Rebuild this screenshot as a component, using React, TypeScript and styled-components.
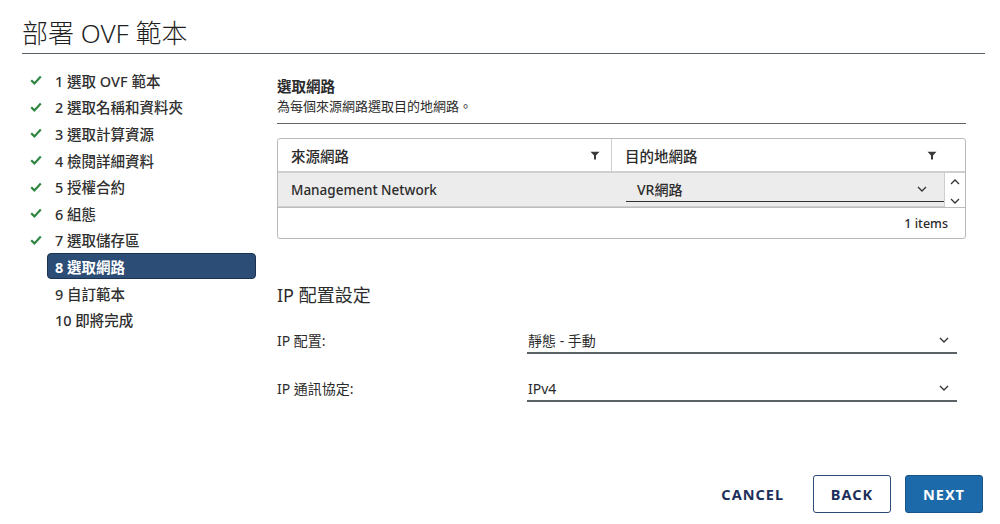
import styled, { createGlobalStyle } from "styled-components";

const Global = createGlobalStyle`
  html, body { margin: 0; padding: 0; background: #fff; }
  body {
    font-family: "Noto Sans", "Noto Sans CJK TC", sans-serif;
    color: #2b2b2b;
  }
  * { box-sizing: border-box; }
`;

/* page */
const Page = styled.div`
  height: 524px;
  display: flex;
  flex-direction: column;
  padding: 0 15px 0 22px;
`;

const Header = styled.h1`
  margin: 17px 0 0;
  padding-bottom: 4px;
  font-size: 26px;
  font-weight: 300;
  line-height: 32px;
  color: #1f1f1f;
  border-bottom: 1.5px solid #5a6166;
`;

const Body = styled.div`
  flex: 1;
  display: grid;
  grid-template-columns: 255px 1fr;
  padding-top: 13px;
`;

/* steps */
const Steps = styled.ol`
  list-style: none;
  margin: 0;
  padding: 0 0 0 8px;
`;

const Step = styled.li`
  display: flex;
  align-items: center;
  height: 26.6px;
`;

const CheckSlot = styled.span`
  width: 17px;
  display: flex;
  align-items: center;
`;

const StepLabel = styled.span<{ $active?: boolean }>`
  flex: 0 0 209px;
  height: 26px;
  display: flex;
  align-items: center;
  padding: 0 7px;
  font-size: 14.5px;
  font-weight: ${(p) => (p.$active ? 700 : 500)};
  color: ${(p) => (p.$active ? "#fff" : "#2f2f2f")};
  background: ${(p) => (p.$active ? "#2c4d75" : "transparent")};
  border: 1.5px solid ${(p) => (p.$active ? "#1b3350" : "transparent")};
  border-radius: 4px;
`;

/* content */
const Content = styled.section`
  padding-top: 7px;
  padding-right: 19px;
`;

const SectionTitle = styled.div`
  font-size: 14.5px;
  font-weight: 700;
  line-height: 20px;
  margin-top: 2px;
`;

const SectionSub = styled.div`
  font-size: 13px;
  line-height: 20px;
  padding-bottom: 7px;
  border-bottom: 1.5px solid #5f6468;
`;

const Grid = styled.div`
  margin-top: 14px;
  border: 1px solid #b9b9b9;
  border-radius: 3px;
  overflow: hidden;
`;

const HeadRow = styled.div`
  display: grid;
  grid-template-columns: 334px 1fr;
  height: 34px;
  border-bottom: 2px solid #cfcfcf;
`;

const HeadCell = styled.div<{ $padRight: number; $last?: boolean }>`
  display: flex;
  align-items: center;
  justify-content: space-between;
  padding: 0 ${(p) => p.$padRight}px 0 13px;
  font-size: 14.5px;
  font-weight: 500;
  border-right: ${(p) => (p.$last ? "none" : "1px solid #cfcfcf")};
`;

const BodyRow = styled.div`
  display: grid;
  grid-template-columns: 1fr 20px;
  height: 35px;
  border-bottom: 1px solid #bdbdbd;
`;

const RowCells = styled.div`
  display: grid;
  grid-template-columns: 334px 1fr;
  background: #ececec;
  border-right: 1px solid #cfcfcf;
  border-bottom: 1px solid #cfcfcf;
`;

const Cell = styled.div`
  display: flex;
  align-items: center;
  padding: 0 13px;
  font-size: 13.5px;
  font-weight: 500;
`;

const Scroller = styled.div`
  display: flex;
  flex-direction: column;
  align-items: center;
  justify-content: space-between;
  padding: 6px 0 3px;
`;

const Footer = styled.div`
  height: 30px;
  display: flex;
  align-items: center;
  justify-content: flex-end;
  padding-right: 17px;
  font-size: 12.5px;
  font-weight: 500;
`;

const InlineSelect = styled.div`
  align-self: end;
  display: flex;
  align-items: center;
  justify-content: space-between;
  height: 25px;
  margin: 0 0 4px 14px;
  padding: 0 17px 0 11px;
  border-bottom: 1px solid #333;
  font-size: 14px;
  font-weight: 500;
`;

const FormTitle = styled.h2`
  margin: 44px 0 0;
  font-size: 18px;
  font-weight: 400;
  line-height: 24px;
`;

const Field = styled.div<{ $gap: number }>`
  display: grid;
  grid-template-columns: 250px 430px;
  align-items: center;
  margin-top: ${(p) => p.$gap}px;
`;

const FieldLabel = styled.label`
  font-size: 14px;
`;

const Select = styled.div`
  display: flex;
  align-items: center;
  justify-content: space-between;
  height: 28px;
  padding: 2px 8px 0 1px;
  border-bottom: 2px solid #5b6266;
  font-size: 14px;
`;

/* buttons */
const Actions = styled.div`
  display: flex;
  justify-content: flex-end;
  align-items: center;
  gap: 14px;
  padding-right: 2px;
  margin-bottom: 11px;
`;

const Button = styled.button<{ $variant: "link" | "outline" | "primary" }>`
  height: 38px;
  min-width: 78px;
  padding: 0 14px;
  font-family: "Noto Sans", sans-serif;
  font-size: 14.5px;
  font-weight: 700;
  letter-spacing: 1px;
  border-radius: 3px;
  color: ${(p) => (p.$variant === "primary" ? "#fff" : "#1c2f5a")};
  background: ${(p) => (p.$variant === "primary" ? "#1c6aa9" : "#fff")};
  border: 1.5px solid
    ${(p) =>
      p.$variant === "primary" ? "#175589" : p.$variant === "outline" ? "#2b4b73" : "transparent"};
`;

/* icons */
const Check = () => (
  <svg width="12" height="10" viewBox="0 0 12 10">
    <polyline points="1.2,5.2 4.4,8.4 10.8,1.6" fill="none" stroke="#2e8540" strokeWidth="2.2" />
  </svg>
);

const Filter = () => (
  <svg width="10" height="9" viewBox="0 0 10 9">
    <path d="M0.5 0.8 H9.5 L6 4.4 V8.4 H4 V4.4 Z" fill="#3a3a3a" />
  </svg>
);

const Chevron = ({ up }: { up?: boolean }) => (
  <svg width="10" height="6" viewBox="0 0 10 6">
    <polyline
      points={up ? "1,5 5,1 9,5" : "1,1 5,5 9,1"}
      fill="none"
      stroke="#333"
      strokeWidth="1.3"
    />
  </svg>
);

const steps = [
  "1 選取 OVF 範本",
  "2 選取名稱和資料夾",
  "3 選取計算資源",
  "4 檢閱詳細資料",
  "5 授權合約",
  "6 組態",
  "7 選取儲存區",
  "8 選取網路",
  "9 自訂範本",
  "10 即將完成",
];
const current = 7;

export default function App() {
  return (
    <>
      <Global />
      <Page>
        <Header>部署 OVF 範本</Header>

        <Body>
          <Steps>
            {steps.map((s, i) => (
              <Step key={s}>
                <CheckSlot>{i < current && <Check />}</CheckSlot>
                <StepLabel $active={i === current}>{s}</StepLabel>
              </Step>
            ))}
          </Steps>

          <Content>
            <SectionTitle>選取網路</SectionTitle>
            <SectionSub>為每個來源網路選取目的地網路。</SectionSub>

            <Grid>
              <HeadRow>
                <HeadCell $padRight={11}>
                  來源網路 <Filter />
                </HeadCell>
                <HeadCell $padRight={28} $last>
                  目的地網路 <Filter />
                </HeadCell>
              </HeadRow>
              <BodyRow>
                <RowCells>
                  <Cell>Management Network</Cell>
                  <InlineSelect>
                    VR網路 <Chevron />
                  </InlineSelect>
                </RowCells>
                <Scroller>
                  <Chevron up />
                  <Chevron />
                </Scroller>
              </BodyRow>
              <Footer>1 items</Footer>
            </Grid>

            <FormTitle>IP 配置設定</FormTitle>
            <Field $gap={19}>
              <FieldLabel>IP 配置:</FieldLabel>
              <Select>
                靜態 - 手動 <Chevron />
              </Select>
            </Field>
            <Field $gap={20}>
              <FieldLabel>IP 通訊協定:</FieldLabel>
              <Select>
                IPv4 <Chevron />
              </Select>
            </Field>
          </Content>
        </Body>

        <Actions>
          <Button $variant="link">CANCEL</Button>
          <Button $variant="outline">BACK</Button>
          <Button $variant="primary">NEXT</Button>
        </Actions>
      </Page>
    </>
  );
}
